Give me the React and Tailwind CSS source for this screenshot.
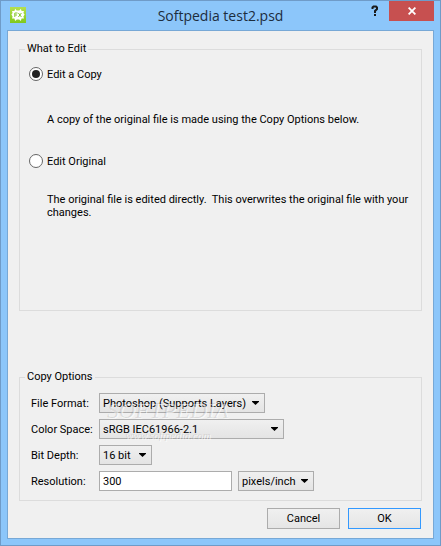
import { useState } from 'react';

const editModes = [
  {
    id: 'copy',
    label: 'Edit a Copy',
    description: 'A copy of the original file is made using the Copy Options below.',
  },
  {
    id: 'original',
    label: 'Edit Original',
    description: 'The original file is edited directly.  This overwrites the original file with your changes.',
  },
];

const controlStyle = 'h-5 rounded-none border border-[#acacac] text-black outline-none';

function AppIcon() {
  return (
    <svg className="h-4 w-4" viewBox="0 0 16 16" aria-hidden="true">
      <defs>
        <linearGradient id="leaf" x1="0" y1="0" x2="0" y2="1">
          <stop offset="0" stopColor="#b5e04f" />
          <stop offset="1" stopColor="#80c91d" />
        </linearGradient>
      </defs>
      <rect width="16" height="16" fill="url(#leaf)" />
      <path
        fill="#fff"
        d="M5.2 1.8 6.6 3.4h2.8L10.8 1.8 11.6 4H14l-.6 2 1.2 1.6L13.4 9.4l.6 2.2h-2.4l-.8 2.4-1.6-1.4H6.8L5.2 14l-.8-2.4H2l.6-2.2L1.4 7.6 2.6 6 2 4h2.4z"
      />
      <path fill="none" stroke="#86c92c" strokeWidth="1" d="M4.8 10V6h2.7M4.8 8h2.2M8.4 6l3 4M11.4 6l-3 4" />
    </svg>
  );
}

function TitleBar({ title }) {
  return (
    <header className="grid h-[29px] grid-cols-[1fr_auto_1fr]">
      <div className="pt-1.5 pl-[9px]">
        <AppIcon />
      </div>
      <h1 className="font-['Open_Sans',sans-serif] text-[14px] leading-[29px] text-[#1d2d3d]">{title}</h1>
      <div className="flex items-start justify-end pr-1.5">
        <button type="button" aria-label="Help" className="flex h-5 w-7 items-center justify-center">
          <svg className="h-3 w-2" viewBox="0 0 8 12" aria-hidden="true">
            <path fill="none" stroke="#1a1a1a" strokeWidth="2" d="M1.5 4V2.5L2.5 1.5h2.5L6 2.5V4L4 6V8" />
            <path fill="#1a1a1a" d="M3 9h2v2H3z" />
          </svg>
        </button>
        <button type="button" aria-label="Close" className="flex h-5 w-[45px] items-center justify-center bg-[#c75050]">
          <svg className="h-2 w-2" viewBox="0 0 8 8" aria-hidden="true">
            <path fill="none" stroke="#fff" strokeWidth="1.8" d="M.6.6l6.8 6.8M7.4.6.6 7.4" />
          </svg>
        </button>
      </div>
    </header>
  );
}

function Group({ title, className, children }) {
  return (
    <fieldset className="relative min-w-0 border border-[#dcdcdc]">
      <legend className="ml-[5px] h-3.5 px-0.5">{title}</legend>
      <div className={className}>{children}</div>
    </fieldset>
  );
}

function Dropdown({ width, options, ...props }) {
  return (
    <span className={`relative block ${width}`}>
      <select
        {...props}
        className={`${controlStyle} block w-full appearance-none bg-linear-to-b from-[#f0f0f0] to-[#e4e4e4] pr-4 pl-[3px]`}
      >
        {options.map((option) => (
          <option key={option}>{option}</option>
        ))}
      </select>
      <svg className="pointer-events-none absolute top-2 right-1.5 h-1 w-[7px]" viewBox="0 0 7 4" aria-hidden="true">
        <path d="M0 0h7v.7L3.5 4 0 .7z" />
      </svg>
    </span>
  );
}

function Row({ id, label, children }) {
  return (
    <div className="flex items-center">
      <label htmlFor={id} className="w-[68px] shrink-0">{label}</label>
      {children}
    </div>
  );
}

function Watermark() {
  return (
    <div className="pointer-events-none absolute top-[17px] left-[87px] flex flex-col items-center gap-1 font-['Liberation_Serif',serif] text-black/10 italic [text-shadow:1px_1px_0_rgba(255,255,255,0.6)]">
      <span className="text-[23px] leading-5">SOFTPEDIA</span>
      <span className="text-[11px] leading-5">www.softpedia.com</span>
    </div>
  );
}

export default function App() {
  const [mode, setMode] = useState('copy');

  return (
    <div className="flex min-h-screen flex-col border border-[#6f9bc8] bg-[#8cc6fa] font-[Roboto,sans-serif] text-[11px] leading-[13px] text-black">
      <TitleBar title="Softpedia test2.psd" />

      <main className="mx-1.5 mb-1.5 flex flex-1 flex-col border border-[#77a8d6] bg-[#f0f0f0] px-[11px] pt-[11px] pb-[9px]">
        <Group title="What to Edit" className="px-[9px] pt-[11px] pb-[84px]">
          <div className="flex flex-col gap-[15px]">
            {editModes.map(({ id, label, description }) => (
              <div key={id}>
                <label className="flex items-center gap-1">
                  <input
                    type="radio"
                    name="mode"
                    value={id}
                    checked={mode === id}
                    onChange={() => setMode(id)}
                    className="flex h-3.5 w-3.5 shrink-0 appearance-none items-center justify-center rounded-full border border-[#666] bg-white before:h-2 before:w-2 before:rounded-full checked:before:bg-[#222]"
                  />
                  {label}
                </label>
                <div className="mt-[18px] flex min-h-10 items-center pl-[18px]">
                  <p className="whitespace-pre-wrap">{description}</p>
                </div>
              </div>
            ))}
          </div>
        </Group>

        <div className="flex-1" />

        <Group title="Copy Options" className="px-[11px] py-[9px]">
          <div className="flex flex-col gap-1.5">
            <Row id="format" label="File Format:">
              <Dropdown id="format" width="w-[166px]" options={['Photoshop (Supports Layers)']} />
            </Row>
            <Row id="space" label="Color Space:">
              <Dropdown id="space" width="w-[185px]" options={['sRGB IEC61966-2.1']} />
            </Row>
            <Row id="depth" label="Bit Depth:">
              <Dropdown id="depth" width="w-[53px]" options={['16 bit']} />
            </Row>
            <Row id="resolution" label="Resolution:">
              <input id="resolution" defaultValue="300" className={`${controlStyle} mr-1.5 w-[133px] bg-white px-[3px]`} />
              <Dropdown aria-label="Resolution unit" width="w-[76px]" options={['pixels/inch']} />
            </Row>
          </div>
          <Watermark />
        </Group>

        <div className="mt-[7px] flex justify-end gap-2 pr-px">
          <button type="button" className="h-[21px] w-[73px] border border-[#acacac] bg-linear-to-b from-[#f0f0f0] to-[#e5e5e5]">
            Cancel
          </button>
          <button type="button" className="h-[21px] w-[73px] border border-[#3399ff] bg-linear-to-b from-[#f0f0f0] to-[#e5e5e5]">
            OK
          </button>
        </div>
      </main>
    </div>
  );
}
